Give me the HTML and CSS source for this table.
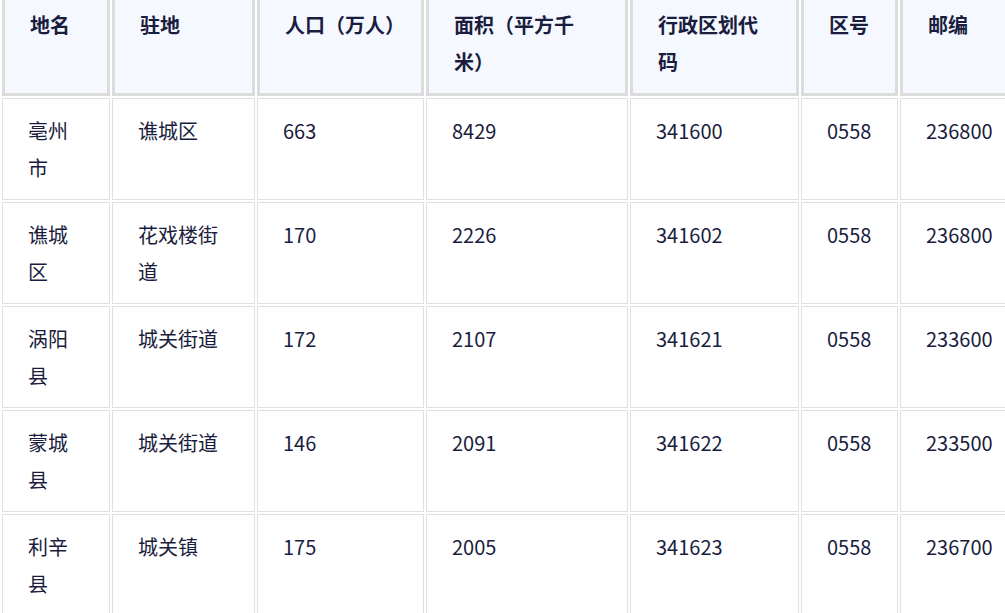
FILE: index.html
```html
<!DOCTYPE html>
<html lang="zh-CN">
<head>
<meta charset="utf-8">
<title>亳州市行政区划</title>
<link rel="stylesheet" href="styles.css">
</head>
<body>
<div class="wrap">
<table class="data">
  <colgroup>
    <col class="c1"><col class="c2"><col class="c3"><col class="c4"><col class="c5"><col class="c6"><col class="c7">
  </colgroup>
  <thead>
    <tr><th>地名</th><th>驻地</th><th>人口（万人）</th><th>面积（平方千米）</th><th>行政区划代码</th><th>区号</th><th>邮编</th></tr>
  </thead>
  <tbody>
    <tr><td>亳州市</td><td>谯城区</td><td>663</td><td>8429</td><td>341600</td><td>0558</td><td>236800</td></tr>
    <tr><td>谯城区</td><td>花戏楼街道</td><td>170</td><td>2226</td><td>341602</td><td>0558</td><td>236800</td></tr>
    <tr><td>涡阳县</td><td>城关街道</td><td>172</td><td>2107</td><td>341621</td><td>0558</td><td>233600</td></tr>
    <tr><td>蒙城县</td><td>城关街道</td><td>146</td><td>2091</td><td>341622</td><td>0558</td><td>233500</td></tr>
    <tr><td>利辛县</td><td>城关镇</td><td>175</td><td>2005</td><td>341623</td><td>0558</td><td>236700</td></tr>
  </tbody>
</table>
</div>
</body>
</html>
```
FILE: styles.css
```css
html, body {
  margin: 0;
  padding: 0;
  background: #ffffff;
  overflow: hidden;
}
.wrap {
  width: 1005px;
  height: 613px;
  overflow: hidden;
}
.data {
  margin-top: -12px;
  border-collapse: separate;
  border-spacing: 2px;
  table-layout: fixed;
  width: 1040px;
  font-family: "Noto Sans CJK SC", "Noto Sans", sans-serif;
  font-size: 20px;
  line-height: 37px;
  color: #1a1d3d;
}
.c1 { width: 108px; }
.c2 { width: 143px; }
.c3 { width: 167px; }
.c4 { width: 202px; }
.c5 { width: 169px; }
.c6 { width: 97px; }
.c7 { width: 140px; }
.data th,
.data td {
  text-align: left;
  vertical-align: top;
  padding: 13px 25px;
  word-break: normal;
}
.data th {
  background: #f5f8ff;
  border: 3px solid #dcdcdc;
  font-weight: 700;
}
.data td {
  border: 1px solid #e0e0e0;
  font-weight: 400;
}
```
